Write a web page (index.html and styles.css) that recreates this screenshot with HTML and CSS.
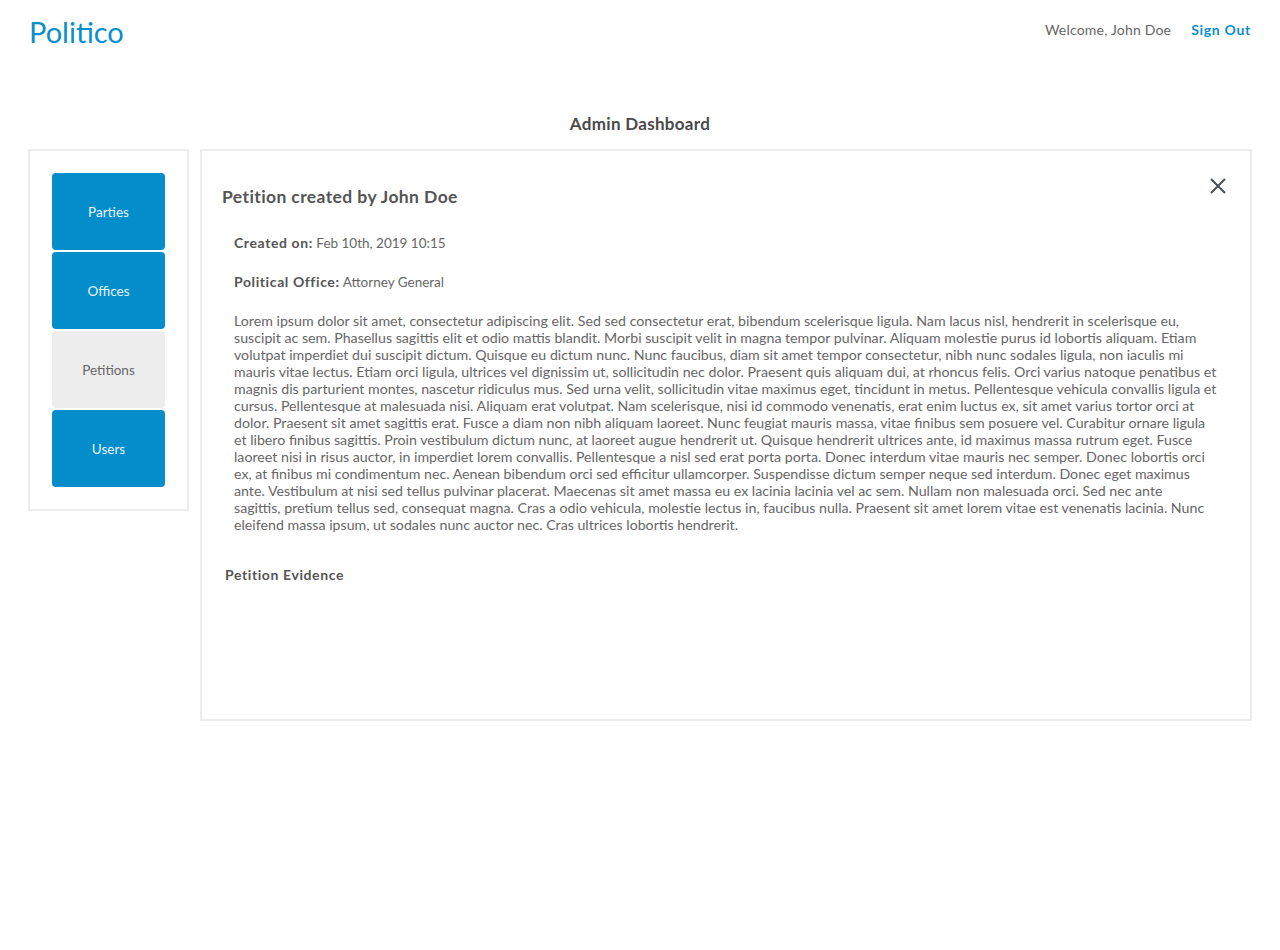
FILE: index.html
```html
<!DOCTYPE html>
<html lang="en">
<head>
<meta charset="utf-8">
<title>Politico - Admin Dashboard</title>
<link rel="stylesheet" href="styles.css">
</head>
<body>
<header class="topbar">
  <a class="logo" href="#">Politico</a>
  <nav class="user-nav">
    <span class="welcome">Welcome, John Doe</span>
    <a class="signout" href="#">Sign Out</a>
  </nav>
</header>
<main class="dashboard">
  <h1 class="page-title">Admin Dashboard</h1>
  <div class="layout">
    <aside class="sidebar">
      <a class="side-btn" href="#">Parties</a>
      <a class="side-btn" href="#">Offices</a>
      <a class="side-btn active" href="#">Petitions</a>
      <a class="side-btn" href="#">Users</a>
    </aside>
    <section class="panel">
      <div class="panel-head">
        <h2 class="panel-title">Petition created by John Doe</h2>
        <button class="close-btn" aria-label="Close">
          <svg width="18" height="18" viewBox="0 0 18 18"><path d="M2 2 L16 16 M16 2 L2 16" stroke="#4a4f57" stroke-width="2" fill="none"/></svg>
        </button>
      </div>
      <div class="details">
        <p class="meta"><strong>Created on:</strong> Feb 10th, 2019 10:15</p>
        <p class="meta"><strong>Political Office:</strong> Attorney General</p>
        <p class="body-text">Lorem ipsum dolor sit amet, consectetur adipiscing elit. Sed sed consectetur erat, bibendum scelerisque ligula. Nam lacus nisl, hendrerit in scelerisque eu, suscipit ac sem. Phasellus sagittis elit et odio mattis blandit. Morbi suscipit velit in magna tempor pulvinar. Aliquam molestie purus id lobortis aliquam. Etiam volutpat imperdiet dui suscipit dictum. Quisque eu dictum nunc. Nunc faucibus, diam sit amet tempor consectetur, nibh nunc sodales ligula, non iaculis mi mauris vitae lectus. Etiam orci ligula, ultrices vel dignissim ut, sollicitudin nec dolor. Praesent quis aliquam dui, at rhoncus felis. Orci varius natoque penatibus et magnis dis parturient montes, nascetur ridiculus mus. Sed urna velit, sollicitudin vitae maximus eget, tincidunt in metus. Pellentesque vehicula convallis ligula et cursus. Pellentesque at malesuada nisi. Aliquam erat volutpat. Nam scelerisque, nisi id commodo venenatis, erat enim luctus ex, sit amet varius tortor orci at dolor. Praesent sit amet sagittis erat. Fusce a diam non nibh aliquam laoreet. Nunc feugiat mauris massa, vitae finibus sem posuere vel. Curabitur ornare ligula et libero finibus sagittis. Proin vestibulum dictum nunc, at laoreet augue hendrerit ut. Quisque hendrerit ultrices ante, id maximus massa rutrum eget. Fusce laoreet nisi in risus auctor, in imperdiet lorem convallis. Pellentesque a nisl sed erat porta porta. Donec interdum vitae mauris nec semper. Donec lobortis orci ex, at finibus mi condimentum nec. Aenean bibendum orci sed efficitur ullamcorper. Suspendisse dictum semper neque sed interdum. Donec eget maximus ante. Vestibulum at nisi sed tellus pulvinar placerat. Maecenas sit amet massa eu ex lacinia lacinia vel ac sem. Nullam non malesuada orci. Sed nec ante<br>sagittis, pretium tellus sed, consequat magna. Cras a odio vehicula, molestie lectus in, faucibus nulla. Praesent sit amet lorem vitae est venenatis lacinia. Nunc eleifend massa ipsum, ut sodales nunc auctor nec. Cras ultrices lobortis hendrerit.</p>
      </div>
      <h3 class="evidence">Petition Evidence</h3>
    </section>
  </div>
</main>
</body>
</html>
```
FILE: styles.css
```css
* { box-sizing: border-box; }
html, body { margin: 0; padding: 0; background: #fff; }
body {
  font-family: Lato, "Noto Sans", sans-serif;
  color: #555;
}
.topbar {
  display: flex;
  justify-content: space-between;
  align-items: center;
  padding: 10px 29px 0 29px;
  height: 58px;
}
.logo {
  font-size: 29px;
  color: #0a8fcc;
  text-decoration: none;
  font-weight: 400;
  margin-top: -6px;
}
.user-nav {
  display: flex;
  align-items: center;
  gap: 20px;
  margin-top: -10px;
}
.welcome { font-size: 14px; color: #666; letter-spacing: 0.2px; }
.signout {
  font-size: 14px;
  color: #0a8fcc;
  font-weight: 700;
  letter-spacing: 0.7px;
  text-decoration: none;
}
.dashboard { padding: 0 28px; }
.page-title {
  margin: 56px 0 15px;
  text-align: center;
  font-size: 17px;
  font-weight: 700;
  color: #4a4a4a;
  line-height: 20px;
  letter-spacing: 0.3px;
}
.layout {
  display: flex;
  align-items: flex-start;
  gap: 11px;
}
.sidebar {
  width: 161px;
  flex: 0 0 161px;
  border: 2px solid #ececec;
  padding: 22px;
  display: flex;
  flex-direction: column;
  gap: 2px;
}
.side-btn {
  height: 77px;
  display: flex;
  align-items: center;
  justify-content: center;
  background: #038dcb;
  color: #e8f4fb;
  font-size: 13.5px;
  text-decoration: none;
  border-radius: 4px;
}
.side-btn.active { background: #ededed; color: #666; }
.panel {
  flex: 1;
  height: 572px;
  border: 2px solid #ececec;
  padding: 20px 20px;
}
.panel-head {
  display: flex;
  justify-content: space-between;
  align-items: flex-start;
}
.panel-title {
  margin: 15px 0 0;
  font-size: 17.5px;
  font-weight: 700;
  color: #555;
  letter-spacing: 0.4px;
}
.close-btn {
  background: none;
  border: 0;
  padding: 0;
  margin: 6px 3px 0 0;
  cursor: pointer;
  width: 18px;
  height: 18px;
}
.close-btn svg { display: block; }
.details { padding: 0 12px; margin-top: 27px; }
.meta {
  margin: 0 0 21px;
  font-size: 13.5px;
  line-height: 17px;
  color: #666;
}
.meta strong { font-size: 14px; font-weight: 700; color: #555; letter-spacing: 0.6px; }
.body-text {
  margin: 0;
  font-size: 14.2px;
  line-height: 17px;
  color: #666;
}
.evidence {
  margin: 33px 0 0 3px;
  font-size: 14px;
  font-weight: 700;
  letter-spacing: 0.6px;
  color: #555;
}
```
